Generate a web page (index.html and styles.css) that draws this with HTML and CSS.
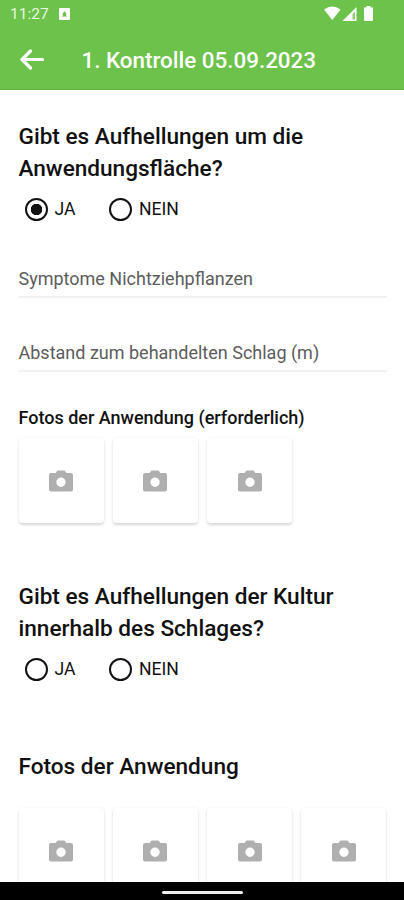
FILE: index.html
```html
<!DOCTYPE html>
<html lang="de">
<head>
  <meta charset="UTF-8" />
  <meta name="viewport" content="width=device-width, initial-scale=1.0"/>
  <title>1. Kontrolle 05.09.2023</title>
  <link rel="stylesheet" href="styles.css">
</head>
<body>
  <!-- camera icon used by all photo tiles -->
  <svg class="sprite" width="0" height="0">
    <symbol id="camera" viewBox="0 0 24 22">
      <path fill-rule="evenodd" d="M8.500 0.500h7l2 2.500H22a2 2 0 0 1 2 2v14.500a2 2 0 0 1-2 2H2a2 2 0 0 1-2-2V5a2 2 0 0 1 2-2h4.500zM12 7.600a4.700 4.700 0 1 0 0 9.400a4.700 4.700 0 1 0 0-9.400z"/>
    </symbol>
  </svg>

  <header>
    <div class="statusbar">
      <span class="clock">11:27</span>
      <svg class="notice" width="11" height="12" viewBox="0 0 11 12">
        <rect width="11" height="12" rx="1" fill="#fff"/>
        <path d="M3 8.500h5M4 8V5.500l1.500-2L7 5.500V8z" fill="#6cc24a" stroke="#6cc24a" stroke-width=".5"/>
      </svg>
      <svg class="signals" width="50" height="16" viewBox="0 0 50 16" fill="#fff">
        <path d="M0 3.500Q8.300-2.500 16.600 3.500L8.300 14z"/>
        <path d="M32.500 1v14H18.500z"/>
        <path d="M28.500 8l2.500-2.500v8h-2.500z" fill="#8fd075"/>
        <path d="M42.500 0h4v1.500H49V14q0 1-1 1h-7q-1 0-1-1V1.500h2.500z"/>
      </svg>
    </div>
    <div class="appbar">
      <svg class="back" width="25" height="21" viewBox="0 0 25 21" fill="none" stroke="#fff" stroke-width="3.200" stroke-linecap="round" stroke-linejoin="round">
        <path d="M10.500 2L2 10.500l8.500 8.500M2.500 10.500H22.500"/>
      </svg>
      <h1>1. Kontrolle 05.09.2023</h1>
    </div>
  </header>

  <main>
    <section class="question">
      <h2>Gibt es Aufhellungen um die Anwendungsfläche?</h2>
      <div class="options">
        <label><input type="radio" name="flaeche" checked>JA</label>
        <label><input type="radio" name="flaeche">NEIN</label>
      </div>
    </section>

    <div class="field">Symptome Nichtziehpflanzen</div>
    <div class="field">Abstand zum behandelten Schlag (m)</div>

    <section class="photos">
      <h3>Fotos der Anwendung (erforderlich)</h3>
      <div class="tiles">
        <div class="tile"><svg><use href="#camera"/></svg></div>
        <div class="tile"><svg><use href="#camera"/></svg></div>
        <div class="tile"><svg><use href="#camera"/></svg></div>
      </div>
    </section>

    <section class="question">
      <h2>Gibt es Aufhellungen der Kultur innerhalb des Schlages?</h2>
      <div class="options">
        <label><input type="radio" name="kultur">JA</label>
        <label><input type="radio" name="kultur">NEIN</label>
      </div>
    </section>

    <section class="photos more">
      <h2>Fotos der Anwendung</h2>
      <div class="tiles">
        <div class="tile"><svg><use href="#camera"/></svg></div>
        <div class="tile"><svg><use href="#camera"/></svg></div>
        <div class="tile"><svg><use href="#camera"/></svg></div>
        <div class="tile"><svg><use href="#camera"/></svg></div>
      </div>
    </section>
  </main>

  <footer><div class="handle"></div></footer>
</body>
</html>
```

FILE: styles.css
```css
:root {
  --green: #6cc24a;
  --text: #111;
  --line: #f1f1f1;
}

* {
  margin: 0;
  padding: 0;
  box-sizing: border-box;
}

body {
  font-family: Roboto, sans-serif;
  background: #fff;
  color: var(--text);
  height: 900px;
  display: flex;
  flex-direction: column;
  overflow: hidden;
}

.sprite {
  display: none;
}

header {
  flex: none;
  height: 90px;
  background: var(--green);
  border-bottom: 1px solid #62ba3e;
  color: #fff;
}

.statusbar {
  display: flex;
  align-items: center;
  height: 28px;
  padding: 0 30px 0 10px;
}

.clock {
  width: 39px;
  margin-right: 10px;
  color: #e9f7e3;
  font-size: 15.5px;
}

.signals {
  margin-left: auto;
}

.appbar {
  display: flex;
  align-items: center;
  height: 62px;
  padding-left: 19.5px;
}

h1 {
  margin-left: 37px;
  padding-top: 1px;
  font-size: 22.4px;
  font-weight: 500;
}

main {
  flex: 1;
  min-height: 0;
  overflow: hidden;
  padding: 31px 17px 0 18.5px;
}

.question {
  margin-bottom: 3px;
}

h2 {
  font-size: 22.6px;
  font-weight: 500;
  line-height: 32px;
}

.options {
  display: flex;
  gap: 33.5px;
  height: 24px;
  margin-top: 12px;
  padding-left: 6px;
}

label {
  display: flex;
  align-items: center;
  gap: 7px;
  font-size: 17.6px;
}

input {
  appearance: none;
  width: 23px;
  height: 23px;
  border: 2px solid #111;
  border-radius: 50%;
}

input:checked {
  background: radial-gradient(circle, #111 5.5px, transparent 6px);
}

.field {
  height: 74px;
  padding-top: 42px;
  border-bottom: 2px solid var(--line);
  color: #5c5c5c;
  font-size: 18px;
  line-height: 26px;
}

.photos {
  height: 209px;
  padding-top: 33px;
}

h3 {
  font-size: 18px;
  font-weight: 500;
  line-height: 26px;
}

.tiles {
  display: flex;
  gap: 9.3px;
  margin-top: 7px;
}

.tile {
  display: flex;
  align-items: center;
  justify-content: center;
  flex: none;
  width: 85px;
  height: 85px;
  border-radius: 4px;
  box-shadow: 0 1.5px 3px rgba(0, 0, 0, 0.16);
}

.tile svg {
  width: 24px;
  height: 22px;
  fill: #afafaf;
}

.more {
  padding-top: 67px;
}

.more .tiles {
  margin-top: 25px;
}

footer {
  flex: none;
  display: flex;
  justify-content: center;
  height: 18px;
  padding-top: 9px;
  background: #000;
}

.handle {
  width: 81px;
  height: 3px;
  border-radius: 2px;
  background: #eee;
}
```
